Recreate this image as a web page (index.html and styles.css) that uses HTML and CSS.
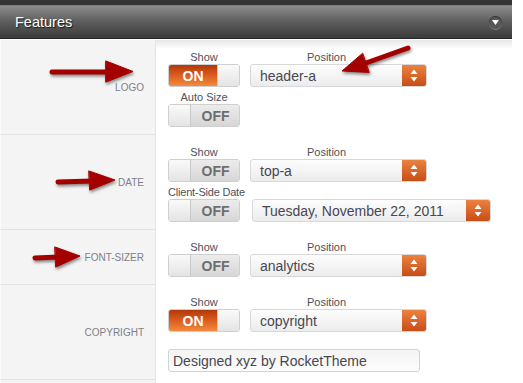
FILE: index.html
```html
<!DOCTYPE html>
<html>

<head>
  <meta http-equiv="Content-Type" content="text/html; charset=UTF-8">
  <title>Features</title>
  <link rel="stylesheet" href="styles.css">
</head>

<body>

  <div id="panel">
    <div class="topbar"></div>

    <div class="panel-head">
      <span class="panel-title">Features</span>
      <span class="collapse">
        <svg width="7" height="5" viewBox="0 0 7 5"><path d="M0 0 H7 L3.5 5 Z" fill="#fff" /></svg>
      </span>
    </div>

    <div class="rows">

      <!-- LOGO -->
      <div class="row">
        <div class="row-label">Logo</div>
        <div class="row-body">
          <div class="line">
            <div class="field">
              <span class="cap">Show</span>
              <div class="toggle on"><span class="side">ON</span><span class="knob"></span></div>
            </div>
            <div class="field">
              <span class="cap pos">Position</span>
              <div class="select"><span class="val">header-a</span><span class="btn">
                  <svg width="8" height="13" viewBox="0 0 8 13"><path d="M4 0.5 L7.5 5 H0.5 Z M0.5 8 H7.5 L4 12.5 Z" fill="#fff" /></svg>
                </span></div>
            </div>
          </div>
          <div class="line">
            <div class="field">
              <span class="cap">Auto Size</span>
              <div class="toggle off"><span class="knob"></span><span class="side">OFF</span></div>
            </div>
          </div>
        </div>
      </div>

      <!-- DATE -->
      <div class="row">
        <div class="row-label">Date</div>
        <div class="row-body">
          <div class="line">
            <div class="field">
              <span class="cap">Show</span>
              <div class="toggle off"><span class="knob"></span><span class="side">OFF</span></div>
            </div>
            <div class="field">
              <span class="cap pos">Position</span>
              <div class="select"><span class="val">top-a</span><span class="btn">
                  <svg width="8" height="13" viewBox="0 0 8 13"><path d="M4 0.5 L7.5 5 H0.5 Z M0.5 8 H7.5 L4 12.5 Z" fill="#fff" /></svg>
                </span></div>
            </div>
          </div>
          <div class="line">
            <div class="field left">
              <span class="cap narrow">Client-Side Date</span>
              <div class="toggle off"><span class="knob"></span><span class="side">OFF</span></div>
            </div>
            <div class="field">
              <span class="cap"></span>
              <div class="select wide"><span class="val">Tuesday, November 22, 2011</span><span class="btn">
                  <svg width="8" height="13" viewBox="0 0 8 13"><path d="M4 0.5 L7.5 5 H0.5 Z M0.5 8 H7.5 L4 12.5 Z" fill="#fff" /></svg>
                </span></div>
            </div>
          </div>
        </div>
      </div>

      <!-- FONT-SIZER -->
      <div class="row">
        <div class="row-label">Font-Sizer</div>
        <div class="row-body">
          <div class="line">
            <div class="field">
              <span class="cap">Show</span>
              <div class="toggle off"><span class="knob"></span><span class="side">OFF</span></div>
            </div>
            <div class="field">
              <span class="cap pos">Position</span>
              <div class="select"><span class="val">analytics</span><span class="btn">
                  <svg width="8" height="13" viewBox="0 0 8 13"><path d="M4 0.5 L7.5 5 H0.5 Z M0.5 8 H7.5 L4 12.5 Z" fill="#fff" /></svg>
                </span></div>
            </div>
          </div>
        </div>
      </div>

      <!-- COPYRIGHT -->
      <div class="row">
        <div class="row-label">Copyright</div>
        <div class="row-body">
          <div class="line">
            <div class="field">
              <span class="cap">Show</span>
              <div class="toggle on"><span class="side">ON</span><span class="knob"></span></div>
            </div>
            <div class="field">
              <span class="cap pos">Position</span>
              <div class="select"><span class="val">copyright</span><span class="btn">
                  <svg width="8" height="13" viewBox="0 0 8 13"><path d="M4 0.5 L7.5 5 H0.5 Z M0.5 8 H7.5 L4 12.5 Z" fill="#fff" /></svg>
                </span></div>
            </div>
          </div>
          <div class="line text-line">
            <input type="text" class="txt" value="Designed xyz by RocketTheme">
          </div>
        </div>
      </div>

      <div class="row last">
        <div class="row-label"></div>
        <div class="row-body"></div>
      </div>

    </div>
  </div>

  <!-- flechas encima -->
  <svg class="arrows" width="523" height="383" viewBox="0 0 523 383">
    <g fill="#a40000" stroke="#a40000" stroke-linecap="round">
      <line x1="52" y1="72" x2="110" y2="72" stroke-width="5" />
      <polygon points="106,61 133,71.5 106,82" stroke-width="1" />

      <line x1="408" y1="48" x2="366" y2="63" stroke-width="5" />
      <polygon points="362.4,53.4 342,71 368.9,72.4" stroke-width="1" />

      <line x1="58" y1="182" x2="93" y2="181" stroke-width="5" />
      <polygon points="89,171 115,180 90,190" stroke-width="1" />

      <line x1="35" y1="258" x2="59" y2="257" stroke-width="5" />
      <polygon points="55,247 80,256 56,267" stroke-width="1" />
    </g>
  </svg>

</body>

</html>
```

FILE: styles.css
```css
body {
  margin: 0;
  background: #fff;
  font-family: "Liberation Sans", Arial, sans-serif;
}

#panel {
  width: 512px;
}

.topbar {
  height: 5px;
  background: #343434;
}

.panel-head {
  height: 32px;
  border-top: 1px solid #7c7c7c;
  border-bottom: 1px solid #262626;
  background: linear-gradient(#8c8c8c, #5c5c5c 50%, #3b3b3b);
  display: flex;
  align-items: center;
  justify-content: space-between;
  padding: 0 10px 0 15px;
}

.panel-title {
  color: #fff;
  font-size: 14.5px;
  text-shadow: 1px 1px 1px #1a1a1a;
}

.collapse {
  width: 13px;
  height: 13px;
  border-radius: 50%;
  background: #585858;
  box-shadow: inset 0 1px 1px #333, 0 1px 0 #7a7a7a;
  display: flex;
  align-items: center;
  justify-content: center;
}

.collapse svg {
  display: block;
  margin-top: 1px;
}

.rows {
  border-top: 1px solid #fff;
}

.row {
  display: flex;
}

.row-label {
  width: 143px;
  padding-right: 11px;
  background: #f4f4f4;
  border-right: 1px solid #e4e4e4;
  border-bottom: 1px solid #e2e2e2;
  border-left: 1px solid #fbfbfb;
  display: flex;
  align-items: center;
  justify-content: flex-end;
  font-size: 10px;
  text-transform: uppercase;
  color: #7e7e8a;
}

.row-body {
  flex: 1;
  padding: 11px 0 7px 12px;
  border-bottom: 1px solid #fff;
}

.row:first-child .row-body {
  background: linear-gradient(#e6e6e6, #fff 9px);
}

.row.last .row-label,
.row.last .row-body {
  height: 10px;
  padding-top: 0;
  padding-bottom: 0;
}

.line {
  display: flex;
  gap: 10px;
}

.line + .line {
  margin-top: 4px;
}

.text-line {
  margin-top: 17px !important;
}

.field {
  display: flex;
  flex-direction: column;
  align-items: center;
}

.field.left {
  align-items: flex-start;
}

.cap {
  height: 13px;
  line-height: 13px;
  font-size: 11px;
  color: #50505a;
  white-space: nowrap;
}

.cap.narrow {
  letter-spacing: -0.2px;
  margin-right: -3px;
}

.cap.pos {
  align-self: stretch;
  text-align: center;
  padding-right: 24px;
}

/* interruptor */
.toggle {
  width: 72px;
  height: 23px;
  box-sizing: border-box;
  border: 1px solid #cfcfcf;
  border-radius: 3px;
  display: flex;
  overflow: hidden;
  font-size: 14px;
  font-weight: bold;
}

.toggle .knob {
  width: 21px;
  background: linear-gradient(#fafafa, #e4e4e4);
}

.toggle .side {
  flex: 1;
  display: flex;
  align-items: center;
  justify-content: center;
}

.toggle.on .side {
  color: #fff;
  background: linear-gradient(#b0380a, #d9591a 45%, #f28a3e);
  border-right: 1px solid #c9c9c9;
}

.toggle.off .side {
  color: #6e6e6e;
  background: linear-gradient(#ececec, #d6d6d6);
  border-left: 1px solid #c9c9c9;
  padding-left: 1px;
}

/* desplegable */
.select {
  width: 177px;
  height: 23px;
  box-sizing: border-box;
  border: 1px solid #d8d8d8;
  border-radius: 3px;
  background: linear-gradient(#fdfdfd, #ececec);
  display: flex;
  align-items: center;
  overflow: hidden;
}

.select.wide {
  width: 239px;
}

.select .val {
  flex: 1;
  padding-left: 9px;
  font-size: 14px;
  color: #474752;
  white-space: nowrap;
}

.select .btn {
  width: 24px;
  height: 100%;
  background: linear-gradient(#ec8240, #c84d16);
  display: flex;
  align-items: center;
  justify-content: center;
}

.select .btn svg {
  display: block;
}

.txt {
  width: 252px;
  height: 23px;
  box-sizing: border-box;
  margin: 0;
  border: 1px solid #d2d2d2;
  border-radius: 3px;
  background: linear-gradient(#f4f4f4, #fcfcfc);
  padding: 0 4px;
  font-family: "Liberation Sans", Arial, sans-serif;
  font-size: 14px;
  color: #474752;
}

.arrows {
  position: absolute;
  left: 0;
  top: 0;
  pointer-events: none;
  filter: drop-shadow(1px 2px 1.5px rgba(0, 0, 0, 0.45));
}
```
